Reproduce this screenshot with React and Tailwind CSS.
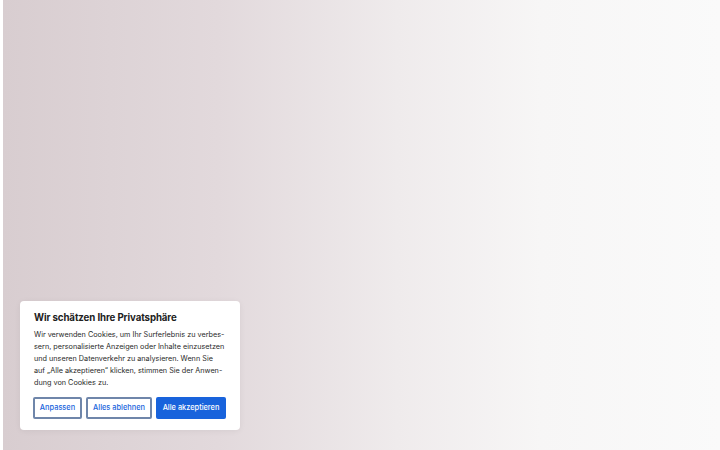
import React from 'react';

// Cookie consent banner over a soft hero backdrop
const bodyLines = [
  'Wir verwenden Cookies, um Ihr Surferlebnis zu verbes-',
  'sern, personalisierte Anzeigen oder Inhalte einzusetzen',
  'und unseren Datenverkehr zu analysieren. Wenn Sie',
  'auf \u201eAlle akzeptieren\u201c klicken, stimmen Sie der Anwen-',
  'dung von Cookies zu.',
];

export default function App() {
  return (
    <div className="relative h-[450px] w-full overflow-hidden bg-white pl-[3px] font-['Inter','Noto_Sans',sans-serif]">
      <div className="h-full w-full bg-[linear-gradient(to_right,#d8cdd0_0%,#e2d9dc_30%,#efebec_55%,#f7f6f6_75%,#fafafa_100%)]" />

      {/* consent card */}
      <div className="absolute left-[20px] top-[301px] flex h-[129px] w-[220px] flex-col rounded-[4px] bg-white px-[13px] pt-[10px] shadow-[0_1px_6px_rgba(0,0,0,0.06)]">
        <h2 className="ml-px text-[9.7px] font-bold leading-[14px] tracking-[-0.1px] text-[#212121]">
          Wir schätzen Ihre Privatsphäre
        </h2>
        <p className="ml-px mt-[4px] text-[7.25px] leading-[12px] text-[#2a2a2a]">
          {bodyLines.map((line) => (
            <span key={line} className="block whitespace-nowrap">{line}</span>
          ))}
        </p>
        <div className="mt-[8px] flex gap-[4px]">
          <button className="flex h-[22px] w-[49px] items-center justify-center rounded-[2px] border-2 border-[#6f86aa] text-[7.4px] font-medium text-[#1863dc]">
            Anpassen
          </button>
          <button className="flex h-[22px] w-[66px] items-center justify-center rounded-[2px] border-2 border-[#6f86aa] text-[7.4px] font-medium text-[#1863dc]">
            Alles ablehnen
          </button>
          <button className="flex h-[22px] w-[70px] items-center justify-center rounded-[2px] bg-[#1863dc] text-[7.4px] font-medium text-white">
            Alle akzeptieren
          </button>
        </div>
      </div>
    </div>
  );
}
